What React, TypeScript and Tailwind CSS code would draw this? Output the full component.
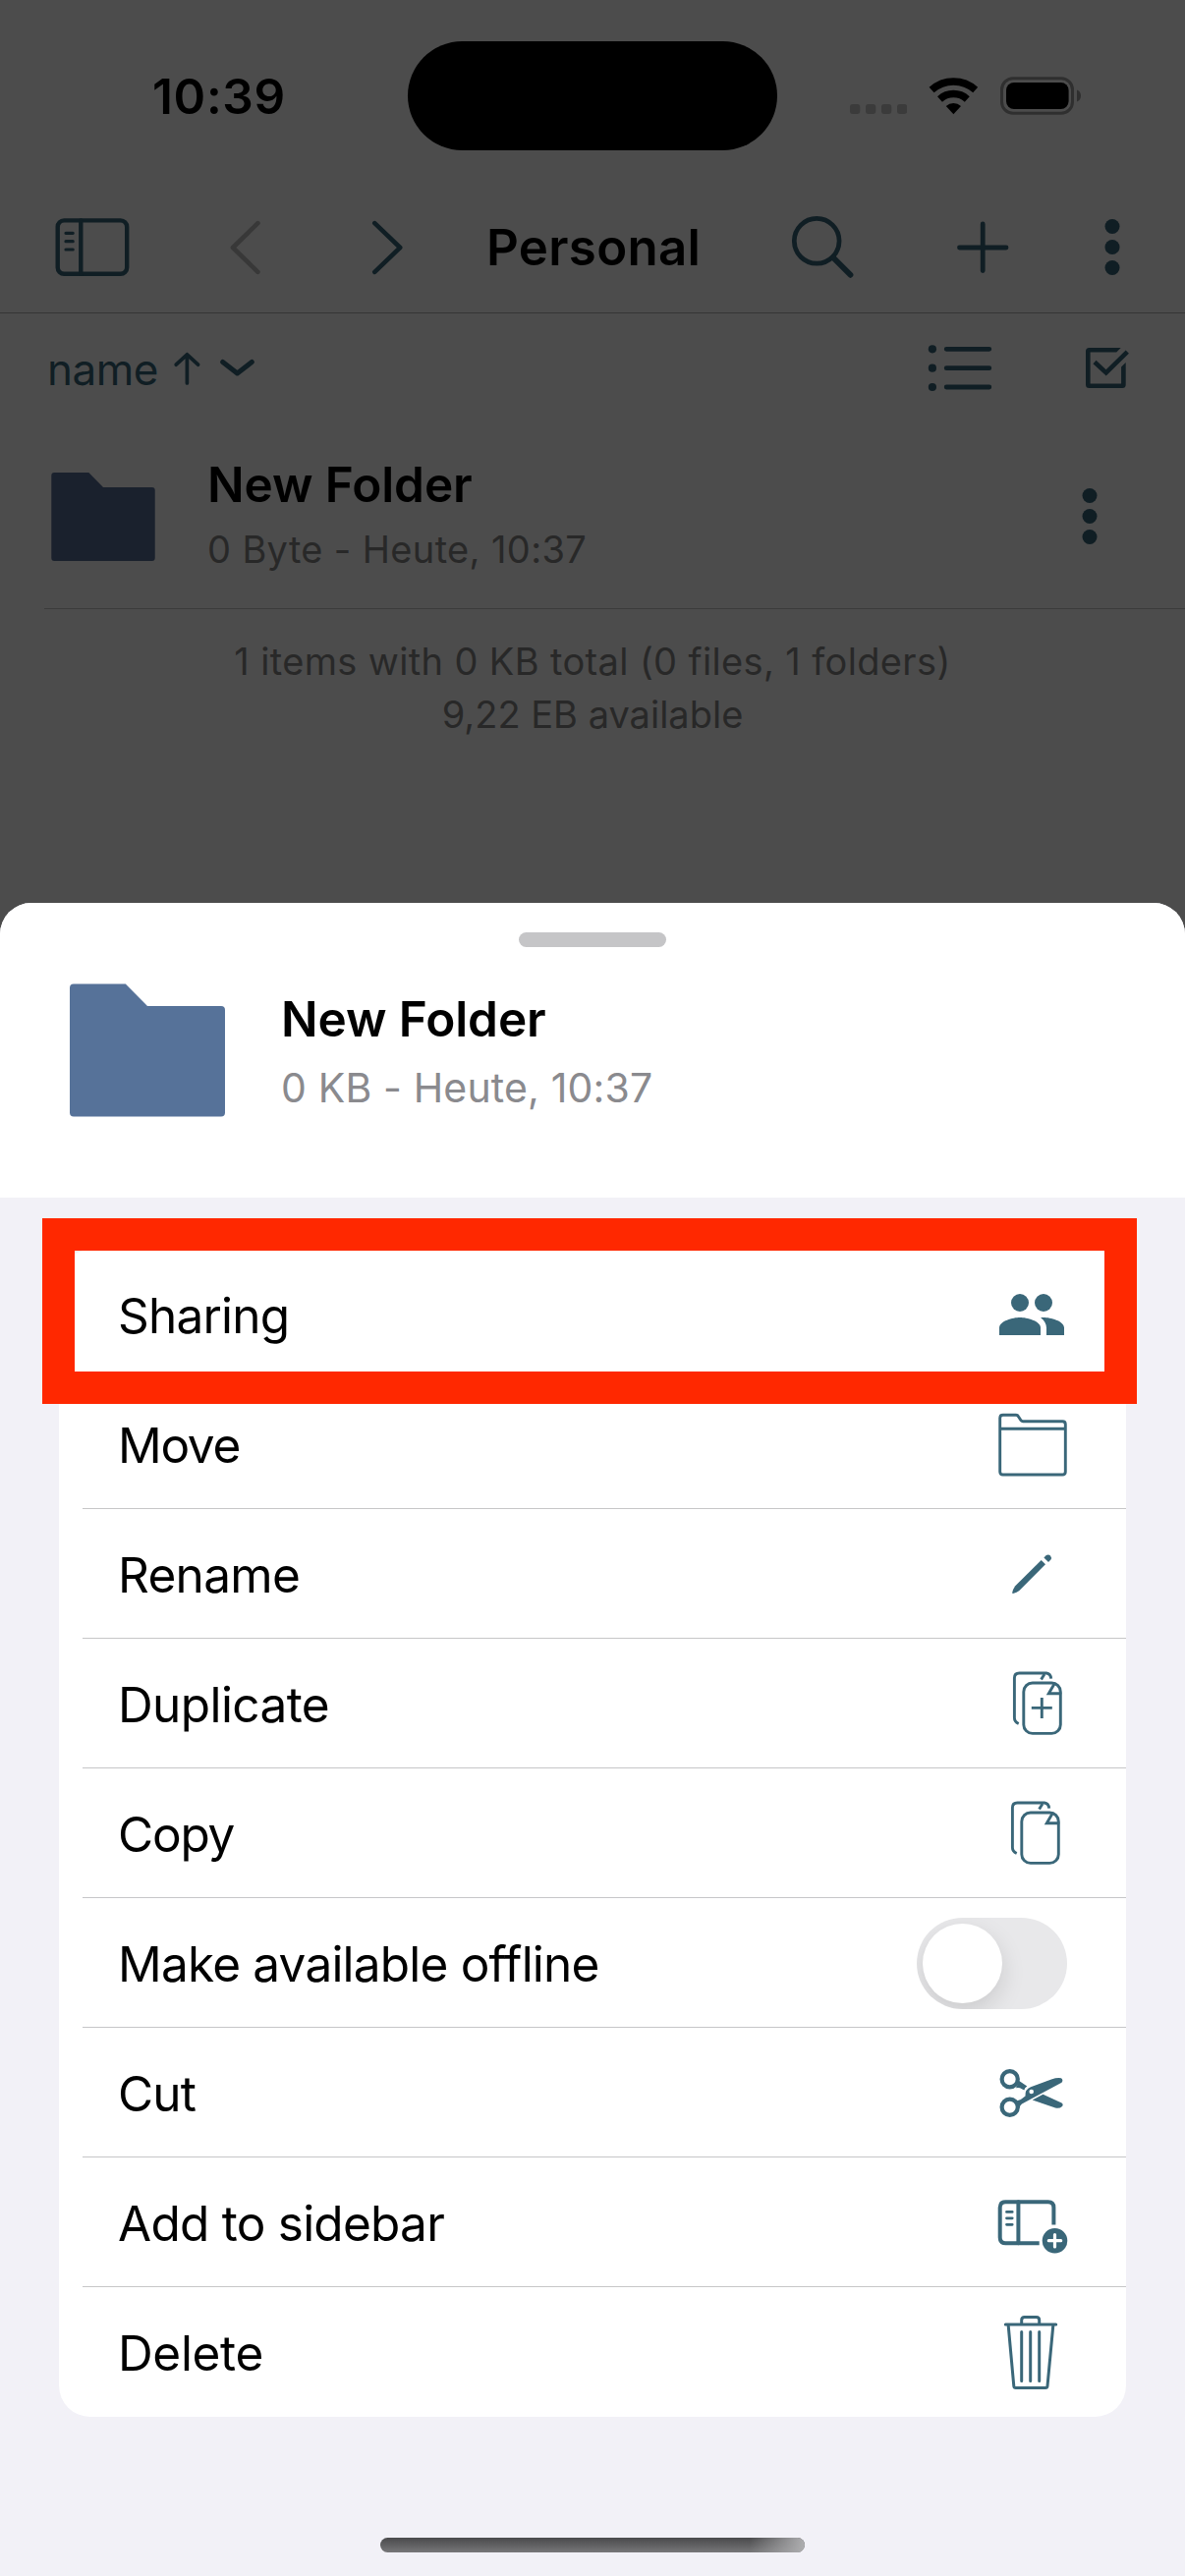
import type { ReactNode } from "react";

const stroke = {
  fill: "none",
  stroke: "currentColor",
  strokeLinecap: "round",
  strokeLinejoin: "round",
} as const;

/* Status bar */

function StatusBar() {
  return (
    <div className="flex h-[196px] items-center pl-[155px] text-black">
      <div className="w-[260px] text-[49.5px] font-semibold tracking-[0.66px]">10:39</div>
      <div className="-mt-[2px] h-[111px] w-[376px] rounded-full bg-black" />
      <svg className="ml-[74px] h-[40px] w-[58px] text-[#3b3b3b]" viewBox="0 0 58 40" fill="currentColor">
        <rect x="0" y="28" width="10.3" height="10" rx="3" />
        <rect x="16" y="28" width="10.3" height="10" rx="3" />
        <rect x="32" y="28" width="10.3" height="10" rx="3" />
        <rect x="48" y="28" width="10.3" height="10" rx="3" />
      </svg>
      <svg className="ml-[22px] h-[40px] w-[51px]" viewBox="0 0 51 40" fill="none" stroke="#000" strokeWidth="7.4">
        <path d="M3.1 13.6A33.4 33.4 0 0 1 47.7 13.6" />
        <path d="M11.5 22.9A20.8 20.8 0 0 1 39.3 22.9" />
        <path d="M17.8 30A11.3 11.3 0 0 1 33 30L25.4 38.3Z" fill="#000" stroke="none" />
      </svg>
      <svg className="ml-[22px] h-[40px] w-[84px] text-[#2f2f2f]" viewBox="0 0 84 40">
        <rect x="1.5" y="1.7" width="72" height="35.6" rx="11.5" {...stroke} strokeWidth="3" />
        <rect x="6" y="6" width="63.6" height="27" rx="8" fill="#000" />
        <path d="M78 13.5C80.6 14.5 82 16.8 82 19.5S80.600 24.500 78 25.500Z" fill="currentColor" />
      </svg>
    </div>
  );
}

/* Navigation bar */

function SidebarIcon() {
  return (
    <svg className="h-[60px] w-[76px] shrink-0" viewBox="56 222 76 60" {...stroke} strokeWidth="4.4">
      <rect x="58.700" y="224.400" width="70.500" height="54.400" rx="6.500" />
      <path d="M82.300 224.400V278.800" />
      <path d="M67 237.300H74.200M67 245.700H74.200M67 254H74.200" strokeWidth="3.200" />
    </svg>
  );
}

function VerticalDots({ className }: { className: string }) {
  return (
    <svg className={className} viewBox="0 0 16 58" fill="currentColor">
      <circle cx="8" cy="7.500" r="7.500" />
      <circle cx="8" cy="28.500" r="7.500" />
      <circle cx="8" cy="49.500" r="7.500" />
    </svg>
  );
}

function NavBar() {
  return (
    <div className="flex h-[123px] items-center border-b border-[#363636] pb-[10px] pl-[56px] text-[#101e24]">
      <SidebarIcon />
      <svg className="ml-[102px] h-[58px] w-[32px] shrink-0 text-[#383838]" viewBox="234 223 32 58" {...stroke} strokeWidth="4.6">
        <path d="M262.400 227.200L237 252L262.400 276.800" />
      </svg>
      <svg className="ml-[112px] h-[58px] w-[34px] shrink-0" viewBox="378 223 34 58" {...stroke} strokeWidth="4.6">
        <path d="M381.300 227.200L407.200 252L381.300 276.800" />
      </svg>
      <div className="ml-[83px] w-[219px] whitespace-nowrap text-[51px] font-semibold tracking-[0.3px] text-black">Personal</div>
      <svg className="ml-[90px] h-[68px] w-[68px] shrink-0" viewBox="804 218 68 68" {...stroke}>
        <circle cx="831.200" cy="245.300" r="22.900" strokeWidth="4.700" />
        <path d="M848 262.200L865.500 279.800" strokeWidth="5.800" />
      </svg>
      <svg className="ml-[100px] h-[56px] w-[56px] shrink-0" viewBox="972 224 56 56" {...stroke} strokeWidth="4.800">
        <path d="M976.500 252H1024M1000.200 228V275.600" />
      </svg>
      <VerticalDots className="ml-[96px] h-[58px] w-[16px] shrink-0" />
    </div>
  );
}

/* File list */

function SortBar() {
  return (
    <div className="flex h-[112px] items-center pl-[48px] pr-[56px] text-[#101e24]">
      <div className="mt-[1px] w-[126px] text-[44px] tracking-[-0.5px]">name</div>
      <svg className="h-[36px] w-[32px]" viewBox="174 357 32 36" {...stroke} strokeWidth="3.700">
        <path d="M190.400 361V390M179.200 371.200L190.400 360.800L201.600 371.200" />
      </svg>
      <svg className="ml-[16px] h-[24px] w-[40px]" viewBox="222 363 40 24" {...stroke} strokeWidth="5">
        <path d="M226.700 368.500L241.500 379.900L256.300 368.500" />
      </svg>
      <svg className="ml-auto h-[50px] w-[68px]" viewBox="944 350 68 50" {...stroke} strokeWidth="4.800">
        <path d="M963.200 355.300H1006.800M963.200 374.700H1006.800M963.200 394H1006.800" />
        <g fill="currentColor" stroke="none">
          <circle cx="948.900" cy="355.300" r="4.100" />
          <circle cx="948.900" cy="374.700" r="4.100" />
          <circle cx="948.900" cy="394" r="4.100" />
        </g>
      </svg>
      <svg className="ml-[92px] h-[46px] w-[46px]" viewBox="1104 352 46 46" fill="none" stroke="currentColor" strokeWidth="4.600">
        <path
          d="M1140.700 354H1108.500Q1105 354 1105 357.500V391.500Q1105 395 1108.500 395H1142.200Q1145.700 395 1145.700 391.500V369L1141.100 373.500V390.400H1109.600V358.600H1136.200Z"
          fill="currentColor"
          stroke="none"
        />
        <path d="M1114 368.500L1125.700 379.400L1147.300 358.200" />
      </svg>
    </div>
  );
}

function FolderRow() {
  return (
    <div className="ml-[45px] flex h-[189px] items-center border-b border-[#3b3b3b] pt-[1px]">
      <svg className="ml-[7px] h-[90px] w-[106px] text-[#1a212d]" viewBox="52 481 106 90" fill="currentColor">
        <path d="M52.300 484Q52.300 481 55.300 481H90.300L105 496H154.700Q157.700 496 157.700 499V568Q157.700 571 154.700 571H55.300Q52.300 571 52.300 568Z" />
      </svg>
      <div className="ml-[53px] leading-[66px]">
        <div className="text-[49.5px] font-semibold tracking-[-0.09px] text-black">New Folder</div>
        <div className="text-[38px] tracking-[0.36px] text-[#282828]">0 Byte - Heute, 10:37</div>
      </div>
      <VerticalDots className="ml-auto mr-[89px] h-[58px] w-[16px] text-[#101e24]" />
    </div>
  );
}

/* Action icons: each one is drawn in a 90 x 132 cell that fills a row's height */

function ActionIcon({ children }: { children: ReactNode }) {
  return (
    <svg className="mr-[56px] h-[132px] w-[90px] text-[#3a6779]" viewBox="0 0 90 132" {...stroke} strokeWidth="2.900">
      {children}
    </svg>
  );
}

const documents = (
  <>
    <rect x="41.800" y="45" width="37.500" height="51.400" rx="9" />
    <path d="M73 46L67.300 55.700H79" strokeLinejoin="miter" />
    <path d="M36.700 86.500Q32.400 84.500 32.400 80.500V40Q32.400 35 37.400 35H65Q69.200 35.500 69.700 40.600" strokeLinecap="butt" />
    <path d="M63 36L59.600 41.400" strokeLinecap="butt" />
  </>
);

const icons = {
  sharing: (
    <g transform="translate(14 30) scale(3)" fill="currentColor" stroke="none">
      <circle cx="8" cy="8" r="3" />
      <circle cx="16" cy="8" r="3" />
      <path d="M8 13c-2.330 0-7 1.170-7 3.500V19h14v-2.500c0-2.330-4.670-3.500-7-3.500z" />
      <path d="M16 13c-.29 0-.62.020-.97.050 1.160.84 1.970 1.970 1.970 3.450V19h6v-2.500c0-2.330-4.670-3.500-7-3.500z" />
    </g>
  ),
  move: (
    <path d="M17.700 39.300Q17.700 36.300 20.700 36.300H34Q35.700 36.300 36.600 38L38.700 41.300Q39.500 42.700 41 42.700H81.300Q84.300 42.700 84.300 45.700V94Q84.300 97 81.300 97H20.700Q17.700 97 17.700 94ZM17.700 50.300H84.300" />
  ),
  rename: (
    <g fill="currentColor" stroke="none">
      <path d="M59.700 52L64 56.300L37.400 83Q35 85 31 86Q30 86 30.200 85Q31 81.500 33 78.600Z" />
      <path d="M62.400 49.400L64.800 47.100Q67 45.800 69 47.500Q70.700 49.500 69.400 51.500L67 53.900Z" />
    </g>
  ),
  duplicate: (
    <>
      {documents}
      <path d="M49.800 70.400H70.800M60.300 60V81" strokeLinecap="butt" />
    </>
  ),
  copy: <g transform="translate(-2 0)">{documents}</g>,
  cut: (
    <>
      <circle cx="27.700" cy="52.300" r="8.100" strokeWidth="4.200" />
      <circle cx="27.700" cy="80.700" r="8.100" strokeWidth="4.200" />
      <g fill="currentColor" stroke="none">
        <path d="M34.500 74.500Q40 73 43.500 69.500Q43 62.500 49 60.300L70 52.500Q76 50.500 80 51.300Q82.500 53.500 80.500 55.700L52 71L40 77.500Q38 78.500 37.500 82Z" />
        <path d="M37.200 54L45.300 59.400Q42.800 61 42.300 63.600L38 61.300Q36 60.500 34 61.300Z" />
        <path d="M61.500 67.700L80.500 76.500Q82.500 78 81 80Q78 82.700 74 81.500L50.700 73.400Z" />
      </g>
      <circle cx="49.700" cy="65" r="2.300" fill="#fff" stroke="none" />
    </>
  ),
  sidebar: (
    <>
      <path d="M72.400 68.500V51Q72.400 45.300 66.700 45.300H23.400Q17.700 45.300 17.700 51V81.600Q17.700 87.300 23.400 87.300H57.700" strokeWidth="4" strokeLinecap="butt" />
      <path d="M36.400 45.300V87.300" strokeWidth="4" />
      <path d="M24.500 55.400H30.200M24.500 61.800H30.200M24.500 68.300H30.200" strokeWidth="2.800" />
      <circle cx="73.500" cy="84.700" r="12.800" fill="currentColor" stroke="none" />
      <path d="M67.300 84.700H79.700M73.500 78.500V90.900" stroke="#fff" strokeWidth="3.200" />
    </>
  ),
  trash: (
    <g strokeWidth="3">
      <path d="M23.300 38H74.700M39.700 38V33.500Q39.700 30.500 42.700 30.500H54.700Q57.700 30.500 57.700 33.500V38" />
      <path d="M26.200 39L31.800 100.700Q32 102.600 33.800 102.600H64Q65.800 102.600 66 100.700L71.800 39" />
      <path d="M39.700 45.500V95.500M48.700 45.500V95.500M57.700 45.500V95.500" />
    </g>
  ),
};

function Toggle() {
  return (
    <div className="mr-[60px] mt-[1px] h-[93px] w-[153px] overflow-hidden rounded-full bg-[#e8e8ea] p-[6px]">
      <div className="h-[81px] w-[81px] rounded-full bg-white shadow-[0_9px_24px_rgba(0,0,0,0.13)]" />
    </div>
  );
}

const actions: { label: string; tracking: string; icon?: ReactNode }[] = [
  { label: "Sharing", tracking: "tracking-[-0.79px]", icon: icons.sharing },
  { label: "Move", tracking: "tracking-[-1.3px]", icon: icons.move },
  { label: "Rename", tracking: "tracking-[-0.7px]", icon: icons.rename },
  { label: "Duplicate", tracking: "tracking-[-0.6px]", icon: icons.duplicate },
  { label: "Copy", tracking: "tracking-[-1.2px]", icon: icons.copy },
  { label: "Make available offline", tracking: "tracking-[-0.8px]" },
  { label: "Cut", tracking: "tracking-[-0.8px]", icon: icons.cut },
  { label: "Add to sidebar", tracking: "tracking-[-0.75px]", icon: icons.sidebar },
  { label: "Delete", tracking: "tracking-[-0.35px]", icon: icons.trash },
];

function ActionSheet() {
  return (
    <div className="flex h-[1703px] flex-col overflow-hidden rounded-t-[32px] bg-[#f2f1f7]">
      <div className="h-[300px] bg-white pt-[30px]">
        <div className="mx-auto h-[15px] w-[150px] rounded-full bg-[#c5c5c7]" />
        <div className="mt-[37px] flex items-start pl-[71px]">
          <svg className="h-[136px] w-[158px] text-[#567299]" viewBox="71 1001 158 136" fill="currentColor">
            <path d="M71 1005.500Q71 1001.500 75 1001.500H127.800L150 1024H225Q229 1024 229 1028V1132.500Q229 1136.500 225 1136.500H75Q71 1136.500 71 1132.500Z" />
          </svg>
          <div className="ml-[57px] mt-[1px] leading-[70px]">
            <div className="text-[49.5px] font-semibold tracking-[-0.09px] text-black">New Folder</div>
            <div className="text-[41px] tracking-[0.15px] text-[#8a8a8e]">0 KB - Heute, 10:37</div>
          </div>
        </div>
      </div>
      <div className="relative mx-[60px] mt-[53px]">
        <div className="overflow-hidden rounded-[32px] bg-white">
          {actions.map(({ label, tracking, icon }, i) => (
            <div key={label} className="pl-[24px]">
              <div className={i < actions.length - 1 ? "flex h-[132px] items-center border-b border-[#c6c6c8]" : "flex h-[132px] items-center"}>
                <div className={`ml-[36px] mt-[2px] flex-1 text-[49.5px] leading-[66px] text-black ${tracking}`}>{label}</div>
                {icon ? <ActionIcon>{icon}</ActionIcon> : <Toggle />}
              </div>
            </div>
          ))}
        </div>
        <div className="absolute -left-[17px] -top-[32px] h-[189px] w-[1114px] border-[33px] border-[#ff2800]" />
      </div>
      <div className="mx-auto mt-[123px] flex h-[15px] w-[432px] justify-end overflow-hidden rounded-full bg-linear-to-b from-[#4a4a4c] to-[#777779]">
        <div className="h-full w-[56px] bg-linear-to-r from-[#aeaeb0]/0 to-[#aeaeb0]" />
      </div>
    </div>
  );
}

export default function App() {
  return (
    <div className="h-[2622px] w-[1206px] overflow-hidden bg-[#4c4c4c] font-['Inter',sans-serif]">
      <div className="h-[919px]">
        <StatusBar />
        <NavBar />
        <SortBar />
        <FolderRow />
        <div className="pt-[26px] text-center text-[38px] leading-[54px] text-[#282828]">
          <div className="tracking-[0.36px]">1 items with 0 KB total (0 files, 1 folders)</div>
          <div>9,22 EB available</div>
        </div>
      </div>
      <ActionSheet />
    </div>
  );
}
